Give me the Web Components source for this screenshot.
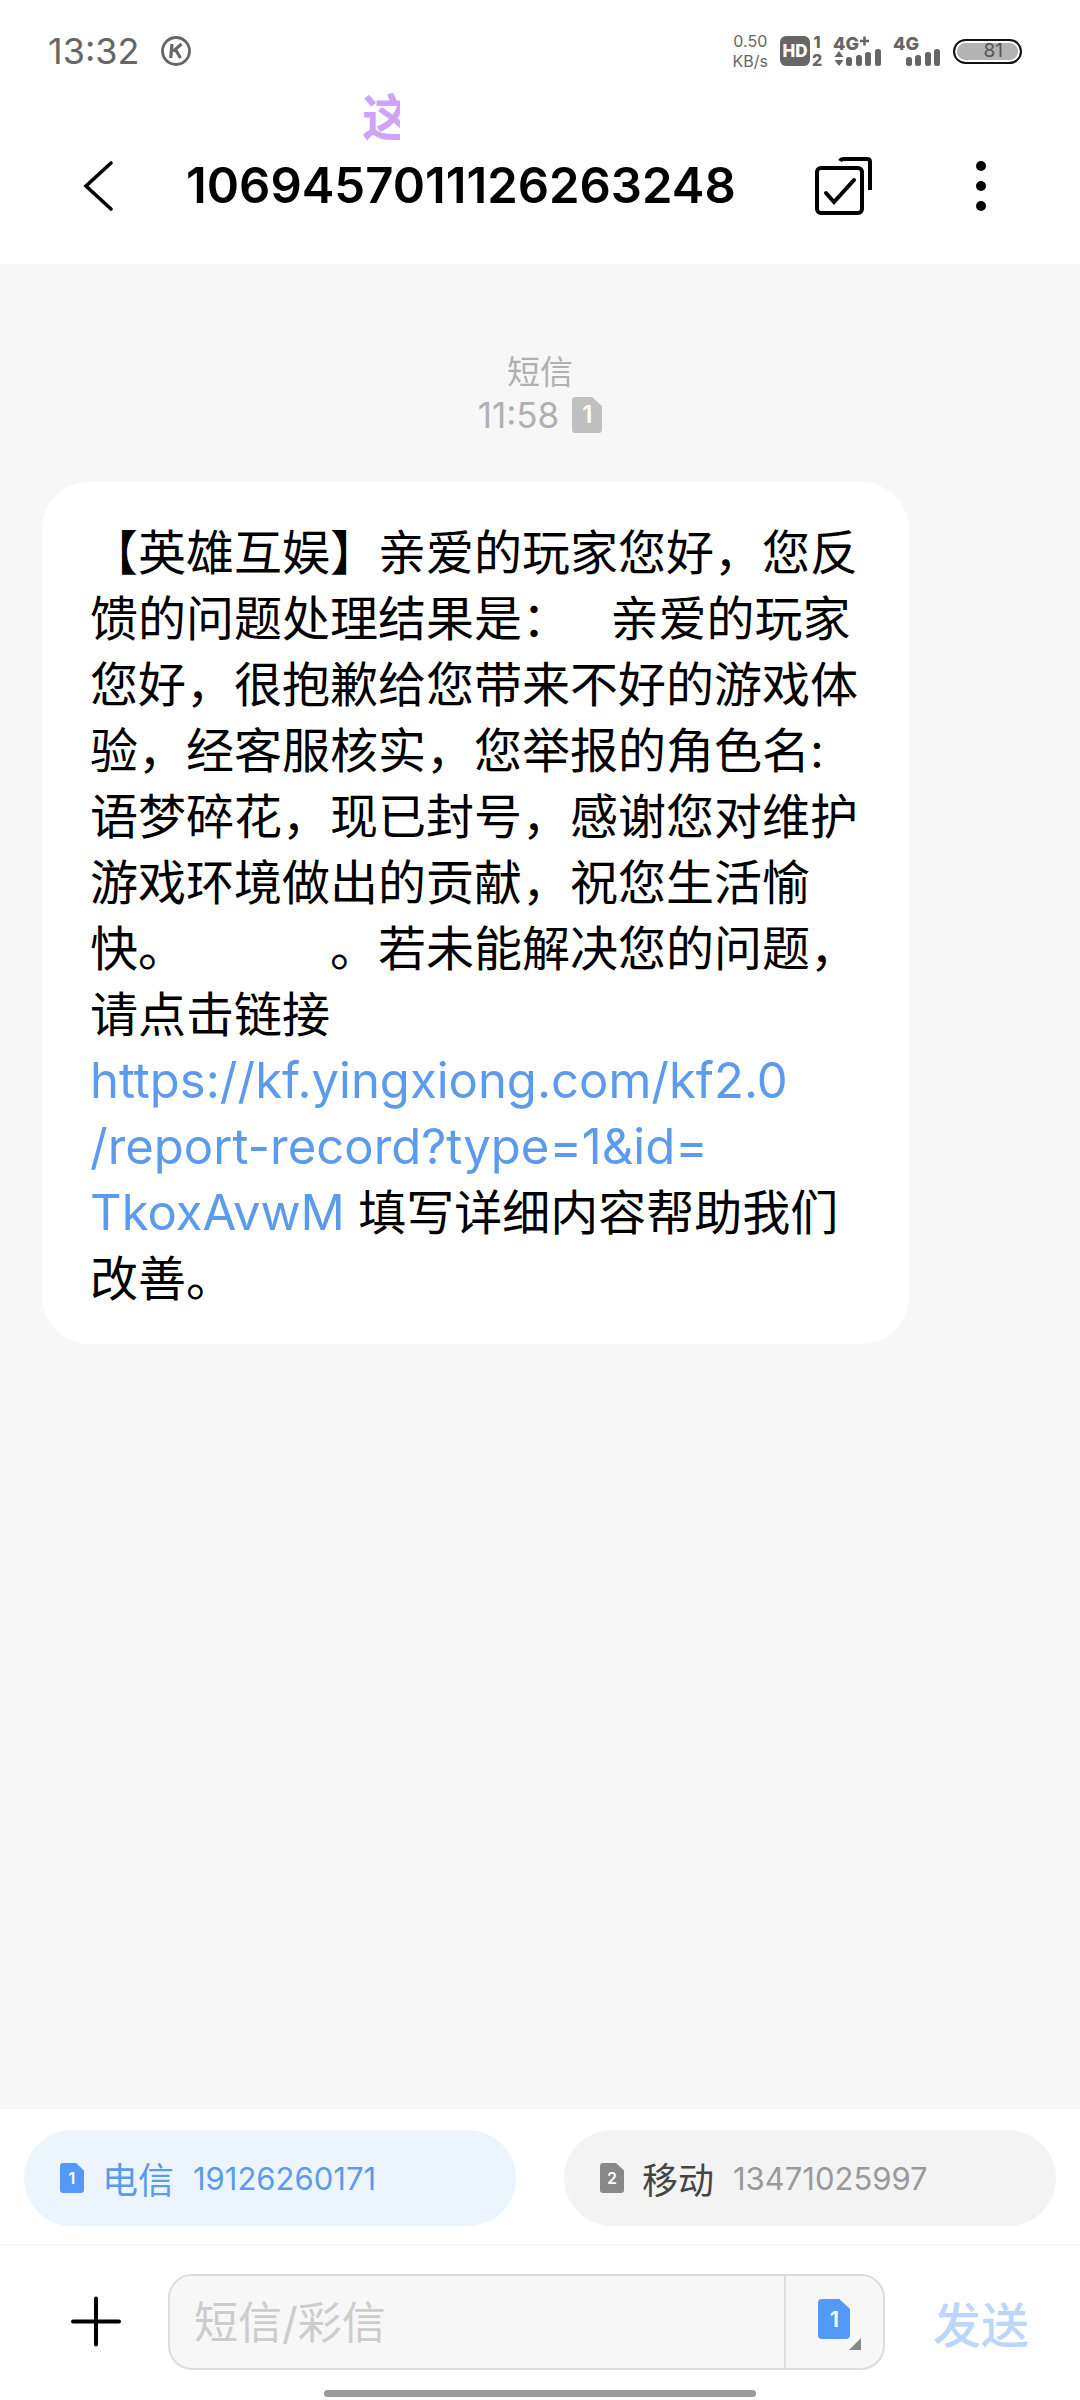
<!DOCTYPE html>
<html lang="zh-CN">
<head>
<meta charset="utf-8">
<meta name="viewport" content="width=device-width, initial-scale=1">
<title>短信</title>
<style>
    body {
        margin: 0;
        font-family: Inter, "Noto Sans CJK SC", sans-serif;
        background: #f7f7f7;
        color: #000;
    }
</style>
</head>
<body>
<sms-screen>
    <status-bar slot="top" time="13:32" speed="0.50" unit="KB/s" battery="81"></status-bar>
    <floating-lyric slot="top">这</floating-lyric>
    <title-bar slot="top">1069457011126263248</title-bar>

    <message-stamp kind="短信" time="11:58" sim="1"></message-stamp>
    <message-bubble>【英雄互娱】亲爱的玩家您好，您反馈的问题处理结果是：&nbsp;&nbsp;&nbsp;亲爱的玩家您好，很抱歉给您带来不好的游戏体验，经客服核实，您举报的角色名:语梦碎花，现已封号，感谢您对维护游戏环境做出的贡献，祝您生活愉快。&#x3000;&#x3000;&#x3000;。若未能解决您的问题，请点击链接<message-link href="https://kf.yingxiong.com/kf2.0/report-record?type=1&amp;id=TkoxAvwM"><span>https://kf.yingxiong.com/kf2.0</span><wbr><span>/report-record?type=1&amp;id=</span><wbr><span>TkoxAvwM</span></message-link> 填写详细内容帮助我们改善。</message-bubble>

    <sim-picker slot="bottom">
        <sim-option sim="1" carrier="电信" number="19126260171" selected></sim-option>
        <sim-option sim="2" carrier="移动" number="13471025997"></sim-option>
    </sim-picker>
    <message-composer slot="bottom" hint="短信/彩信" sim="1"></message-composer>
    <home-indicator slot="bottom"></home-indicator>
</sms-screen>

<script>
class BaseElement extends HTMLElement {
    constructor() {
        super();
        this.attachShadow({ mode: 'open' });
    }

    connectedCallback() {
        this.shadowRoot.innerHTML = this.render();
    }

    attr(name) {
        return this.getAttribute(name) || '';
    }
}

class SmsScreen extends BaseElement {
    render() {
        return `
            <style>
                :host {
                    display: flex;
                    flex-direction: column;
                    min-height: 100vh;
                }
                header, footer {
                    position: relative;
                    background: #fff;
                }
                main {
                    flex: 1;
                    padding: 86px 42px 42px;
                }
            </style>
            <header><slot name="top"></slot></header>
            <main><slot></slot></main>
            <footer><slot name="bottom"></slot></footer>
        `;
    }
}

class StatusBar extends BaseElement {
    render() {
        return `
            <style>
                :host {
                    display: flex;
                    align-items: center;
                    height: 102px;
                    padding: 0 58px 6px 48px;
                    color: #666;
                }
                .time { font-size: 36px; line-height: 48px; }
                .app { margin-left: 22px; }
                .right {
                    display: flex;
                    align-items: center;
                    margin-left: auto;
                }
                .speed {
                    display: grid;
                    margin-right: 12px;
                    font-size: 16px;
                    line-height: 20px;
                    text-align: center;
                }
                svg { display: block; }
                text { font-family: Inter, sans-serif; font-weight: 800; }
                .hd { margin-right: 11px; }
                .net { margin-right: 12px; }
                .battery {
                    display: flex;
                    align-items: center;
                    justify-content: flex-end;
                    box-sizing: border-box;
                    width: 69px;
                    height: 25px;
                    padding-right: 17px;
                    border: 2px solid #111;
                    border-radius: 13px;
                    background: #b3b3b3;
                    box-shadow: inset 0 0 0 2px #fff;
                    color: #555;
                    font-size: 19px;
                    line-height: 24px;
                }
            </style>
            <span class="time">${this.attr('time')}</span>
            <svg class="app" width="30" height="30" viewBox="0 0 30 30" fill="none" stroke="#666">
                <circle cx="15" cy="15" r="13.5" stroke-width="2.8"/>
                <path d="M11 8 9.7 22M20.5 8 12 15.4M14.5 13.5 19.5 22" stroke-width="3.2"/>
            </svg>
            <div class="right">
                <div class="speed"><span>${this.attr('speed')}</span><span>${this.attr('unit')}</span></div>
                <svg class="hd" width="43" height="30" viewBox="0 0 43 30" fill="#666" overflow="visible">
                    <rect width="30" height="30" rx="6"/>
                    <text x="15" y="21" font-size="17" text-anchor="middle" fill="#fff">HD</text>
                    <text x="37" y="12" font-size="16" text-anchor="middle">1</text>
                    <text x="37" y="30" font-size="16" text-anchor="middle">2</text>
                </svg>
                <svg class="net" width="48" height="30" viewBox="0 0 48 30" fill="#666" overflow="visible">
                    <text x="-1" y="14" font-size="18">4G</text>
                    <path d="M30.500 0.500v9M26 5h9" stroke="#666" stroke-width="2.600"/>
                    <path d="M5 15l4.500 6h-9zM5 30l4.500-6h-9z"/>
                    <rect x="12" y="21" width="6" height="9" rx="2.500"/>
                    <rect x="22" y="19" width="6" height="11" rx="2.500"/>
                    <rect x="31" y="16" width="6" height="14" rx="2.500"/>
                    <rect x="41" y="13" width="6" height="17" rx="2.500"/>
                </svg>
                <svg class="net" width="47" height="30" viewBox="0 0 47 30" fill="#666" overflow="visible">
                    <text x="-1" y="14" font-size="18">4G</text>
                    <rect x="12" y="21" width="6" height="9" rx="2.500"/>
                    <rect x="21" y="19" width="6" height="11" rx="2.500"/>
                    <rect x="31" y="16" width="6" height="14" rx="2.500"/>
                    <rect x="40" y="13" width="6" height="17" rx="2.500"/>
                </svg>
                <div class="battery">${this.attr('battery')}</div>
            </div>
        `;
    }
}

// Desktop lyric drawn over the header, cut off while it scrolls in
class FloatingLyric extends BaseElement {
    render() {
        return `
            <style>
                :host {
                    position: absolute;
                    top: 88px;
                    left: 362px;
                    width: 38px;
                    overflow: hidden;
                    color: #cda4f8;
                    font-size: 50px;
                    font-weight: 700;
                    line-height: 60px;
                    white-space: nowrap;
                }
            </style>
            <slot></slot>
        `;
    }
}

class TitleBar extends BaseElement {
    render() {
        return `
            <style>
                :host {
                    display: flex;
                    align-items: center;
                    height: 156px;
                    padding: 0 69px 0 72px;
                }
                button {
                    flex: none;
                    width: 60px;
                    height: 60px;
                    padding: 0;
                    border: 0;
                    background: none;
                }
                svg { display: block; }
                h1 {
                    flex: 1;
                    margin: 0 0 0 54px;
                    font-size: 49px;
                    font-weight: 600;
                    line-height: 60px;
                }
                .more { margin-left: 78px; }
            </style>
            <button aria-label="返回">
                <svg width="60" height="60" viewBox="0 0 60 60" fill="none" stroke="#000" stroke-width="3.600" stroke-linecap="round">
                    <path d="M39 7 14 30 39 53"/>
                </svg>
            </button>
            <h1><slot></slot></h1>
            <button aria-label="选择">
                <svg width="60" height="60" viewBox="0 0 60 60" fill="none" stroke="#000" stroke-width="4" stroke-linecap="round">
                    <rect x="4" y="12" width="45" height="45" rx="4"/>
                    <path d="M13 37l8 9 20-22"/>
                    <path d="M27 5q1-2 4-2h23q3 0 3 3v28" stroke-linecap="butt"/>
                </svg>
            </button>
            <button class="more" aria-label="更多">
                <svg width="60" height="60" viewBox="0 0 60 60">
                    <circle cx="30" cy="10" r="5"/>
                    <circle cx="30" cy="30" r="5"/>
                    <circle cx="30" cy="50" r="5"/>
                </svg>
            </button>
        `;
    }
}

class SimIcon extends BaseElement {
    render() {
        return `
            <style>
                :host {
                    display: inline-grid;
                    width: 24px;
                    height: 30px;
                    color: #fff;
                    font-size: 16px;
                    font-weight: 600;
                    line-height: 1;
                }
                :host([size="medium"]) { width: 30px; height: 36px; font-size: 24px; }
                :host([size="large"]) { width: 32px; height: 40px; font-size: 22px; }
                svg, span { grid-area: 1 / 1; }
                svg { width: 100%; height: 100%; }
                span { place-self: center; }
            </style>
            <svg viewBox="0 0 24 30" preserveAspectRatio="none">
                <path d="M3 0h13l8 7.500v19.500q0 3-3 3h-18q-3 0-3-3v-24q0-3 3-3z" fill="${this.attr('fill')}"/>
            </svg>
            <span><slot></slot></span>
        `;
    }
}

class MessageStamp extends BaseElement {
    render() {
        return `
            <style>
                :host {
                    display: flex;
                    flex-direction: column;
                    align-items: center;
                    margin-bottom: 46px;
                    color: #b0b0b0;
                }
                .kind { font-size: 33px; line-height: 44px; }
                .row {
                    display: flex;
                    align-items: center;
                    gap: 13px;
                    font-size: 35px;
                    line-height: 42px;
                }
            </style>
            <span class="kind">${this.attr('kind')}</span>
            <div class="row">
                <time>${this.attr('time')}</time>
                <sim-icon size="medium" fill="#c0c0c0">${this.attr('sim')}</sim-icon>
            </div>
        `;
    }
}

class MessageBubble extends BaseElement {
    render() {
        return `
            <style>
                :host {
                    display: block;
                    box-sizing: border-box;
                    width: 87%;
                    padding: 38px 48px 32px;
                    border-radius: 48px;
                    background: #fff;
                    font-size: 48px;
                    line-height: 66px;
                    text-spacing-trim: space-all;
                }
            </style>
            <slot></slot>
        `;
    }
}

class MessageLink extends BaseElement {
    render() {
        return `
            <style>
                a { color: #5c9aec; font-size: 49px; text-decoration: none; }
                ::slotted(span) { white-space: nowrap; }
            </style>
            <a href="${this.attr('href')}"><slot></slot></a>
        `;
    }
}

class SimPicker extends BaseElement {
    render() {
        return `
            <style>
                :host {
                    display: grid;
                    grid-template-columns: 1fr 1fr;
                    gap: 48px;
                    padding: 21px 24px 18px;
                    border-bottom: 2px solid #f7f7f7;
                }
            </style>
            <slot></slot>
        `;
    }
}

class SimOption extends BaseElement {
    render() {
        const selected = this.hasAttribute('selected');
        return `
            <style>
                :host { --name: #444; --number: #999; --pill: #f3f3f3; }
                :host([selected]) { --name: #5c9aec; --number: #5c9aec; --pill: #ecf4fe; }
                button {
                    display: flex;
                    align-items: center;
                    width: 100%;
                    height: 96px;
                    padding: 0 36px;
                    border: 0;
                    border-radius: 48px;
                    background: var(--pill);
                    font-family: inherit;
                }
                .name {
                    margin: 0 19px 0 18px;
                    color: var(--name);
                    font-size: 36px;
                }
                .number { color: var(--number); font-size: 31px; }
            </style>
            <button aria-pressed="${selected}">
                <sim-icon fill="${selected ? '#5599f8' : '#888'}">${this.attr('sim')}</sim-icon>
                <span class="name">${this.attr('carrier')}</span>
                <span class="number">${this.attr('number')}</span>
            </button>
        `;
    }
}

class MessageComposer extends BaseElement {
    render() {
        return `
            <style>
                :host {
                    display: flex;
                    align-items: center;
                    padding: 28px 51px 20px 66px;
                }
                button {
                    flex: none;
                    padding: 0;
                    border: 0;
                    background: none;
                    font-family: inherit;
                }
                svg { display: block; }
                .add { margin-right: 42px; }
                .field {
                    display: flex;
                    flex: 1;
                    min-width: 0;
                    box-sizing: border-box;
                    height: 96px;
                    border: 2px solid #ddd;
                    border-radius: 24px;
                    background: #f7f7f7;
                }
                input {
                    flex: 1;
                    min-width: 0;
                    padding: 2px 24px 0;
                    border: 0;
                    outline: 0;
                    background: none;
                    font-family: inherit;
                    font-size: 44px;
                }
                input::placeholder { color: #ccc; }
                .sim {
                    display: flex;
                    align-items: center;
                    justify-content: center;
                    position: relative;
                    width: 99px;
                    border-left: 2px solid #ddd;
                }
                .sim sim-icon { margin-bottom: 6px; }
                .sim svg {
                    position: absolute;
                    right: 22px;
                    bottom: 18px;
                }
                .send {
                    margin-left: 48px;
                    color: #bbd6fa;
                    font-size: 48px;
                    font-weight: 500;
                    white-space: nowrap;
                }
            </style>
            <button class="add" aria-label="添加">
                <svg width="60" height="60" viewBox="0 0 60 60" stroke="#000" stroke-width="4" stroke-linecap="round">
                    <path d="M7 29.500h46M30 6.500v46"/>
                </svg>
            </button>
            <div class="field">
                <input type="text" placeholder="${this.attr('hint')}" aria-label="${this.attr('hint')}">
                <button class="sim" aria-label="选择SIM卡">
                    <sim-icon size="large" fill="#5599f8">${this.attr('sim')}</sim-icon>
                    <svg width="12" height="12" viewBox="0 0 12 12"><path d="M12 0v12H0z" fill="#888"/></svg>
                </button>
            </div>
            <button class="send">发送</button>
        `;
    }
}

class HomeIndicator extends BaseElement {
    render() {
        return `
            <style>
                :host { display: block; padding-bottom: 3px; }
                div {
                    width: 40%;
                    height: 7px;
                    margin: 0 auto;
                    border-radius: 4px;
                    background: #999;
                }
            </style>
            <div></div>
        `;
    }
}

customElements.define('sms-screen', SmsScreen);
customElements.define('status-bar', StatusBar);
customElements.define('floating-lyric', FloatingLyric);
customElements.define('title-bar', TitleBar);
customElements.define('sim-icon', SimIcon);
customElements.define('message-stamp', MessageStamp);
customElements.define('message-bubble', MessageBubble);
customElements.define('message-link', MessageLink);
customElements.define('sim-picker', SimPicker);
customElements.define('sim-option', SimOption);
customElements.define('message-composer', MessageComposer);
customElements.define('home-indicator', HomeIndicator);
</script>
</body>
</html>
